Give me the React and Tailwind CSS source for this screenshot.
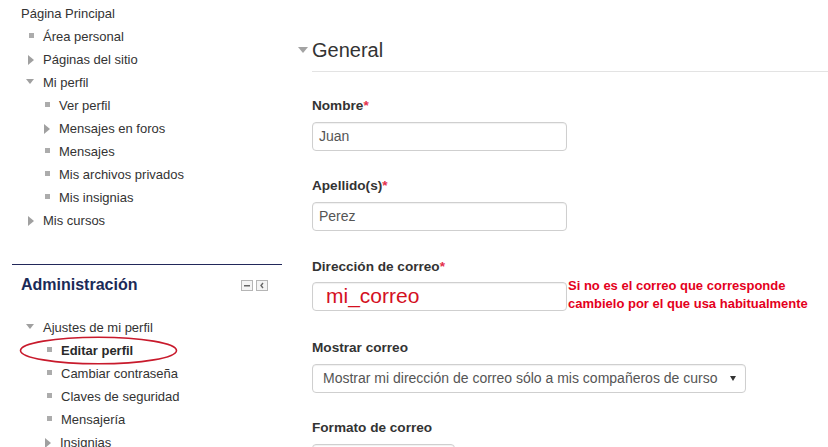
import React from "react";

const font = { fontFamily: '"Liberation Sans", Arial, sans-serif' };

function Bullet() {
  return <span className="block w-[5px] h-[5px] bg-[#acacac] -mt-[3px] ml-[2px]" />;
}
function TriRight() {
  return <span className="block w-0 h-0 border-y-[5px] border-y-transparent border-l-[6px] border-l-[#a0a0a0] ml-[1px]" />;
}
function TriDown() {
  return <span className="block w-0 h-0 border-x-[4.5px] border-x-transparent border-t-[5px] border-t-[#a0a0a0] -mt-[2px]" />;
}

function Row({ pl, icon, children, bold, extra }) {
  return (
    <div className={`relative flex items-center h-[23px] ${pl}`}>
      <span className={`flex items-center shrink-0 ${icon === "none" ? "w-0" : "w-[16px]"}`}>
        {icon === "bullet" && <Bullet />}
        {icon === "right" && <TriRight />}
        {icon === "down" && <TriDown />}
      </span>
      <span className={`text-[13px] leading-[18px] ${bold ? "font-bold text-[#2a2a2a]" : "text-[#333]"}`}>{children}</span>
      {extra}
    </div>
  );
}

function Label({ children, req, className = "" }) {
  return (
    <div className={`text-[13.6px] leading-[18px] font-bold text-[#333] ${className}`}>
      {children}
      {req && <span className="text-[#e4304b]">*</span>}
    </div>
  );
}

function Input({ w, children, className = "" }) {
  return (
    <div
      className={`h-[29px] ${w} border border-[#cfcfcf] rounded-[4px] bg-white shadow-[inset_0_1px_1px_rgba(0,0,0,0.06)] flex items-center shrink-0 ${className}`}
    >
      {children}
    </div>
  );
}

export default function App() {
  return (
    <div className="w-[828px] h-[447px] overflow-hidden bg-white flex" style={font}>
      {/* Left column */}
      <div className="w-[282px] shrink-0 pt-[2px]">
        <Row pl="pl-[21px]" icon="none">Página Principal</Row>
        <Row pl="pl-[27px]" icon="bullet">Área personal</Row>
        <Row pl="pl-[27px]" icon="right">Páginas del sitio</Row>
        <Row pl="pl-[26px]" icon="down"><span className="ml-[1px]">Mi perfil</span></Row>
        <Row pl="pl-[43px]" icon="bullet">Ver perfil</Row>
        <Row pl="pl-[43px]" icon="right">Mensajes en foros</Row>
        <Row pl="pl-[43px]" icon="bullet">Mensajes</Row>
        <Row pl="pl-[43px]" icon="bullet">Mis archivos privados</Row>
        <Row pl="pl-[43px]" icon="bullet">Mis insignias</Row>
        <Row pl="pl-[27px]" icon="right">Mis cursos</Row>

        <div className="ml-[12px] mt-[32px] border-t border-[#22285a]">
          <div className="flex items-center justify-between pl-[9px] pr-[14px] pt-[10px]">
            <span className="text-[16px] leading-[20px] font-bold text-[#1b2a57]">Administración</span>
            <span className="flex gap-[3px]">
              <svg width="12" height="11" viewBox="0 0 12 11">
                <rect x="0.5" y="0.5" width="11" height="10" fill="#f4f4f4" stroke="#b5b5b5" />
                <rect x="3" y="5" width="6" height="1.5" fill="#666" />
              </svg>
              <svg width="12" height="11" viewBox="0 0 12 11">
                <rect x="0.5" y="0.5" width="11" height="10" fill="#f4f4f4" stroke="#b5b5b5" />
                <path d="M7 3 L5 5.5 L7 8" fill="none" stroke="#666" strokeWidth="1.4" />
              </svg>
            </span>
          </div>
        </div>

        <div className="mt-[21px]">
          <Row pl="pl-[26px]" icon="down"><span className="ml-[1px]">Ajustes de mi perfil</span></Row>
          <Row
            pl="pl-[45px]"
            icon="bullet"
            bold
            extra={
              <svg className="absolute left-[19px] top-[-3px]" width="160" height="30" viewBox="0 0 160 30">
                <ellipse cx="79.5" cy="14.5" rx="78" ry="13.3" fill="none" stroke="#c81a2c" strokeWidth="1.6" />
              </svg>
            }
          >
            Editar perfil
          </Row>
          <Row pl="pl-[45px]" icon="bullet">Cambiar contraseña</Row>
          <Row pl="pl-[45px]" icon="bullet">Claves de seguridad</Row>
          <Row pl="pl-[45px]" icon="bullet">Mensajería</Row>
          <Row pl="pl-[44px]" icon="right">Insignias</Row>
        </div>
      </div>

      {/* Right column */}
      <div className="flex-1 pl-[30px] pt-[36px]">
        <div className="flex items-center h-[28px] -ml-[15px]">
          <span className="w-[15px] flex items-center">
            <span className="block w-0 h-0 border-x-[5px] border-x-transparent border-t-[6px] border-t-[#a3a3a3] ml-[1px]" />
          </span>
          <span className="text-[20px] leading-[28px] text-[#333]">General</span>
        </div>
        <div className="mt-[7px] border-t border-[#e3e3e3]" />

        <Label req className="mt-[25px]">Nombre</Label>
        <Input w="w-[255px]" className="mt-[7px] px-[6px]">
          <span className="text-[14px] text-[#555]">Juan</span>
        </Input>

        <Label req className="mt-[26px]">Apellido(s)</Label>
        <Input w="w-[255px]" className="mt-[7px] px-[6px]">
          <span className="text-[14px] text-[#555]">Perez</span>
        </Input>

        <Label req className="mt-[27px]">Dirección de correo</Label>
        <div className="mt-[6px] flex items-start">
          <Input w="w-[255px]" className="pl-[13px]">
            <span className="text-[21px] leading-[24px] text-[#d4101f] -mt-[2px]">mi_correo</span>
          </Input>
          <div className="ml-[1px] -mt-[5px] text-[13px] leading-[18px] font-bold text-[#e4001c]">
            <div>Si no es el correo que corresponde</div>
            <div>cambielo por el que usa habitualmente</div>
          </div>
        </div>

        <Label className="mt-[26px]">Mostrar correo</Label>
        <Input w="w-[434px]" className="mt-[7px] pl-[10px] pr-[9px] justify-between">
          <span className="text-[14px] text-[#555]">Mostrar mi dirección de correo sólo a mis compañeros de curso</span>
          <span className="block w-0 h-0 border-x-[3px] border-x-transparent border-t-[5px] border-t-[#333]" />
        </Input>

        <Label className="mt-[26px]">Formato de correo</Label>
        <Input w="w-[143px]" className="mt-[7px]" />
      </div>
    </div>
  );
}
